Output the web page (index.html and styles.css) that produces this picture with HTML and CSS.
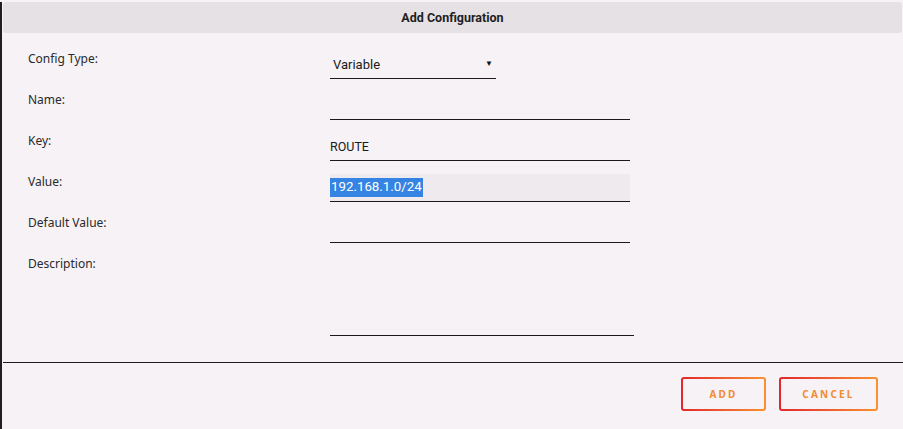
FILE: index.html
```html
<!DOCTYPE html>
<html>
<head>
<meta charset="utf-8">
<link rel="stylesheet" href="styles.css">
</head>
<body>
<div class="dialog">
  <div class="header">Add Configuration</div>
  <div class="form">
    <div class="row">
      <div class="label">Config Type:</div>
      <div class="field select"><span>Variable</span><span class="arrow">▼</span></div>
    </div>
    <div class="row">
      <div class="label">Name:</div>
      <div class="field"></div>
    </div>
    <div class="row">
      <div class="label">Key:</div>
      <div class="field">ROUTE</div>
    </div>
    <div class="row">
      <div class="label">Value:</div>
      <div class="field focused"><span class="sel">192.168.1.0/24</span></div>
    </div>
    <div class="row">
      <div class="label">Default Value:</div>
      <div class="field"></div>
    </div>
    <div class="row">
      <div class="label">Description:</div>
      <div class="field textarea"></div>
    </div>
  </div>
  <div class="footer">
    <button class="btn btn-add">ADD</button>
    <button class="btn btn-cancel">CANCEL</button>
  </div>
</div>
</body>
</html>
```
FILE: styles.css
```css
html, body {
  margin: 0;
  padding: 0;
  background: #f6f2f5;
  height: 100%;
}
.dialog {
  box-sizing: border-box;
  height: 429px;
  margin-top: 2px;
  border-left: 2px solid #1f1f1f;
  display: flex;
  flex-direction: column;
}
.header {
  margin-left: 1px;
  margin-right: 1px;
  height: 31px;
  background: #e6e1e5;
  border-radius: 3px;
  display: flex;
  align-items: center;
  justify-content: center;
  font-family: "Roboto", "Noto Sans", sans-serif;
  font-weight: 700;
  font-size: 12.5px;
  color: #1e1e1e;
}
.form {
  padding: 18px 0 0 26px;
  display: flex;
  flex-direction: column;
  gap: 13px;
}
.row {
  display: flex;
  align-items: flex-start;
}
.label {
  width: 302px;
  padding-top: 0;
  font-family: "Noto Sans", sans-serif;
  font-size: 12px;
  line-height: 16px;
  color: #2a2a2a;
}
.field {
  box-sizing: border-box;
  width: 300px;
  height: 28px;
  border-bottom: 1px solid #1a1a1a;
  display: flex;
  align-items: center;
  padding-top: 0;
  font-family: "Roboto", "Liberation Sans", sans-serif;
  font-size: 12.5px;
  color: #1a1a1a;
}
.select {
  width: 166px;
  padding-left: 3px;
  padding-right: 3px;
  padding-top: 0;
  justify-content: space-between;
  font-size: 13px;
}
.arrow {
  font-size: 8px;
  color: #111;
  margin-top: -3px;
}
.focused {
  background: #eeeaed;
}
.sel {
  background: #3584e4;
  color: #fff;
  padding: 2px 1px 3px 1px;
  font-size: 13.3px;
  line-height: 14px;
}
.textarea {
  width: 304px;
  height: 80px;
}
.footer {
  margin-top: 26px;
  border-top: 1px solid #1c1c1c;
  margin-left: 1px;
  display: flex;
  justify-content: flex-end;
  gap: 13px;
  padding: 14px 25px 0 0;
}
.btn {
  box-sizing: border-box;
  height: 34px;
  border: 2px solid transparent;
  border-radius: 3px;
  background:
    linear-gradient(#f6f2f5, #f6f2f5) padding-box,
    linear-gradient(90deg, #e3262d, #f99230) border-box;
  font-family: "Noto Sans", sans-serif;
  font-weight: 700;
  font-size: 10px;
  letter-spacing: 2.2px;
  color: #f28b32;
  padding: 0;
  margin: 0;
}
.btn-add { width: 85px; }
.btn-cancel { width: 99px; }
```
